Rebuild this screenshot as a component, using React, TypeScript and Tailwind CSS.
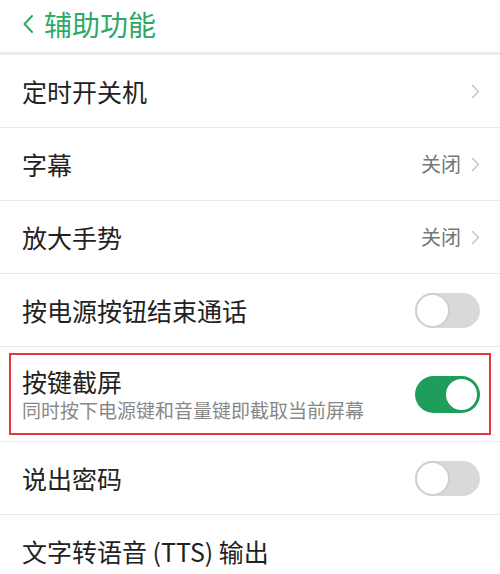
import { useState } from "react";

const font = { fontFamily: '"Noto Sans CJK SC", "Noto Sans", sans-serif' };

function Chevron() {
  return (
    <svg width="9" height="15" viewBox="0 0 9 15" className="ml-[10px]">
      <polyline
        points="1.5,1.5 7.5,7.5 1.5,13.5"
        fill="none"
        stroke="#c9c9c9"
        strokeWidth="1.6"
        strokeLinecap="round"
        strokeLinejoin="round"
      />
    </svg>
  );
}

function Toggle({ on, onClick }: { on: boolean; onClick: () => void }) {
  return (
    <button
      onClick={onClick}
      className={
        on
          ? "relative w-[65px] h-[37px] rounded-full bg-[#1f9d5b] shrink-0"
          : "relative w-[65px] h-[35px] rounded-full bg-[#d9d9d9] shrink-0"
      }
    >
      <span
        className={
          on
            ? "absolute right-[1px] top-[1px] w-[35px] h-[35px] rounded-full bg-white border-2 border-[#1f9d5b]"
            : "absolute left-0 top-0 w-[35px] h-[35px] rounded-full bg-white border-2 border-[#cfcfcf]"
        }
      />
    </button>
  );
}

interface RowProps {
  title: string;
  value?: string;
  chevron?: boolean;
  toggle?: boolean;
  on?: boolean;
  onToggle?: () => void;
}

function Row({ title, value, chevron, toggle, on = false, onToggle }: RowProps) {
  return (
    <div className="h-[73px] flex items-center pl-[22px] pr-[20px] border-b border-[#e8e8e8]">
      <span className="flex-1 text-[25px] text-[#222] leading-none">{title}</span>
      {value && <span className="text-[20px] text-[#777] leading-none">{value}</span>}
      {chevron && <Chevron />}
      {toggle && <Toggle on={on} onClick={() => onToggle && onToggle()} />}
    </div>
  );
}

export default function App() {
  const [powerEnd, setPowerEnd] = useState(false);
  const [screenshot, setScreenshot] = useState(true);
  const [speakPwd, setSpeakPwd] = useState(false);

  return (
    <div className="w-[500px] h-[574px] overflow-hidden bg-white" style={font}>
      <header className="h-[55px] flex items-center pl-[22px] border-b-[3px] border-[#ececec] pb-[4px]">
        <svg width="12" height="20" viewBox="0 0 12 20">
          <polyline
            points="10,2 2.5,10 10,18"
            fill="none"
            stroke="#2ea866"
            strokeWidth="2"
            strokeLinecap="round"
            strokeLinejoin="round"
          />
        </svg>
        <h1 className="ml-[10px] text-[28px] text-[#2ea866] leading-none">辅助功能</h1>
      </header>

      <Row title="定时开关机" chevron />
      <Row title="字幕" value="关闭" chevron />
      <Row title="放大手势" value="关闭" chevron />
      <Row title="按电源按钮结束通话" toggle on={powerEnd} onToggle={() => setPowerEnd(!powerEnd)} />

      <div className="h-[95px] pt-[6px] pb-[6px] px-[9px] border-b border-[#ececec]">
        <div className="h-full flex items-center border-2 border-[#e2383e] pl-[11px] pr-[9px]">
          <div className="flex-1 flex flex-col gap-[6px]">
            <span className="text-[25px] text-[#222] leading-none">按键截屏</span>
            <span className="text-[19px] text-[#888] leading-none">同时按下电源键和音量键即截取当前屏幕</span>
          </div>
          <Toggle on={screenshot} onClick={() => setScreenshot(!screenshot)} />
        </div>
      </div>

      <Row title="说出密码" toggle on={speakPwd} onToggle={() => setSpeakPwd(!speakPwd)} />
      <Row title="文字转语音 (TTS) 输出" />
    </div>
  );
}
